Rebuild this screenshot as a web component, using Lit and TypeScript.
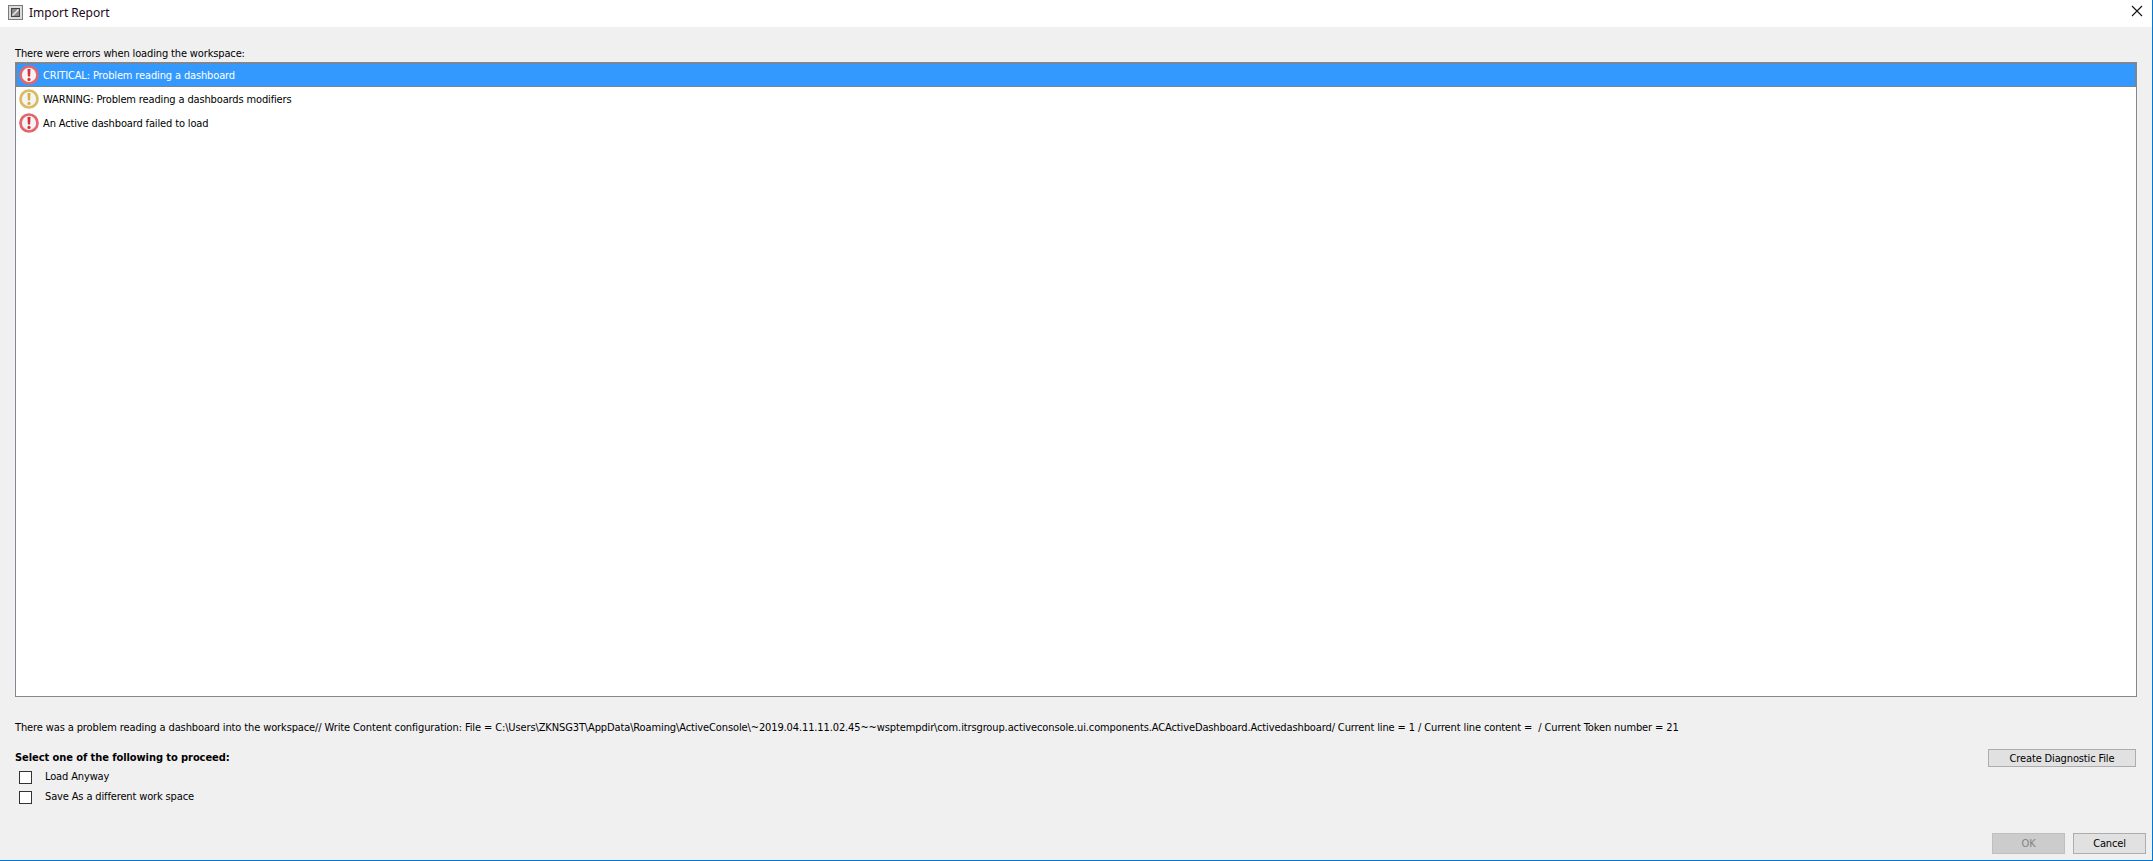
import { LitElement, html, css, svg } from "lit";
import { customElement } from "lit/decorators.js";

const alertIcon = (ring: string, mark: string) => html`<svg class="ic" width="22" height="22" viewBox="0 0 22 22">
  <circle cx="11" cy="11" r="8.5" fill="#f4f4f4" stroke="${ring}" stroke-width="2.7"></circle>
  ${svg`<path d="M9.5 5h3l-.4 7.6h-2.2z" fill="${mark}"></path><circle cx="11" cy="15.4" r="1.6" fill="${mark}"></circle>`}
</svg>`;

@customElement("app-root")
export class AppRoot extends LitElement {
  static styles = css`
    :host { display: flex; flex-direction: column; width: 2153px; height: 861px; box-sizing: border-box; overflow: hidden;
      background: #f0f0f0; color: #000; font-family: "DejaVu Sans Condensed", "Liberation Sans", Arial, sans-serif; font-size: 11px; letter-spacing: -0.14px;
      border-right: 1px solid #0078d7; border-bottom: 1px solid #0078d7; }
    .title { height: 27px; flex: none; box-sizing: border-box; background: #fff; display: flex; align-items: center; padding: 0 8px 3px 8px; }
    .app { width: 15px; height: 15px; margin-right: 6px; }
    .title span { font-family: "Noto Sans", sans-serif; font-size: 12px; letter-spacing: 0; flex: 1; color: #1a0a24; }
    .x { width: 12px; height: 12px; margin-right: 1px; margin-bottom: 2px; }
    .body { flex: 1; display: flex; flex-direction: column; padding: 0 15px 0 15px; min-height: 0; }
    .head { height: 35px; flex: none; display: flex; align-items: flex-end; line-height: 17px; box-sizing: border-box; }
    .list { flex: none; height: 635px; box-sizing: border-box; background: #fff; border: 1px solid #828790; }
    .row { height: 24px; display: flex; align-items: center; gap: 3px; padding-left: 2px; box-sizing: border-box; }
    .row.sel { background: #3399ff; color: #fff; outline: 1px dotted #b8742c; outline-offset: -1px; }
    .ic { flex: none; }
    .detail { height: 17px; margin-top: 22px; line-height: 17px; white-space: pre; flex: none; letter-spacing: -0.12px; }
    .opts { display: flex; margin-top: 13px; flex: none; }
    .left { flex: 1; }
    .bold { font-weight: bold; letter-spacing: -0.07px; line-height: 17px; height: 18px; }
    .opt { display: flex; align-items: center; height: 20px; padding-left: 4px; }
    .opt i { width: 11px; height: 11px; border: 1px solid #333; background: #fff; margin-right: 13px; display: block; }
    .opt span { line-height: 20px; }
    button { font: inherit; letter-spacing: inherit; color: #000; background: #e1e1e1; border: 1px solid #adadad; padding: 0; box-sizing: border-box; }
    .diag { width: 148px; height: 18px; margin-right: 1px; }
    .foot { margin-top: auto; display: flex; justify-content: flex-end; gap: 8px; padding-bottom: 6px; margin-right: -9px; }
    .foot button { height: 21px; }
    .ok { width: 73px; background: #cccccc; border-color: #bfbfbf; color: #838383; }
    .cancel { width: 73px; }
  `;
  render() {
    const red = "#e2666c";
    return html`
      <div class="title">
        <svg class="app" viewBox="0 0 15 15"><rect x=".5" y=".5" width="14" height="14" fill="#dcdcdc" stroke="#7a7a7a"></rect><rect x="3.5" y="3.5" width="8" height="8" fill="#8a8a8a" stroke="#444"></rect><path d="M4.5 10.5l6-6" stroke="#eee" stroke-width="1.4"></path></svg>
        <span>Import Report</span>
        <svg class="x" viewBox="0 0 12 12"><path d="M1 1l10 10M11 1L1 11" stroke="#111" stroke-width="1.1" fill="none"></path></svg>
      </div>
      <div class="body">
        <div class="head">There were errors when loading the workspace:</div>
        <div class="list">
          <div class="row sel">${alertIcon(red, "#d8303c")}<span>CRITICAL: Problem reading a dashboard</span></div>
          <div class="row">${alertIcon("#d9bb62", "#d6b03e")}<span>WARNING: Problem reading a dashboards modifiers</span></div>
          <div class="row">${alertIcon(red, "#d8303c")}<span>An Active dashboard failed to load</span></div>
        </div>
        <div class="detail">There was a problem reading a dashboard into the workspace// Write Content configuration: File = C:\\Users\\ZKNSG3T\\AppData\\Roaming\\ActiveConsole\\~2019.04.11.11.02.45~~wsptempdir\\com.itrsgroup.activeconsole.ui.components.ACActiveDashboard.Activedashboard/ Current line = 1 / Current line content =  / Current Token number = 21</div>
        <div class="opts">
          <div class="left">
            <div class="bold">Select one of the following to proceed:</div>
            <div class="opt"><i></i><span>Load Anyway</span></div>
            <div class="opt"><i></i><span>Save As a different work space</span></div>
          </div>
          <button class="diag">Create Diagnostic File</button>
        </div>
        <div class="foot"><button class="ok">OK</button><button class="cancel">Cancel</button></div>
      </div>
    `;
  }
}
